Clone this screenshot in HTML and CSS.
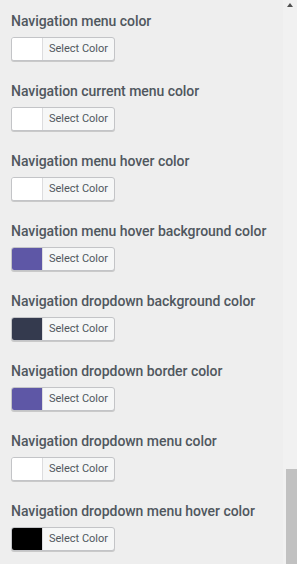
FILE: index.html
```html
<!DOCTYPE html>
<html lang="en">
<head>
    <meta charset="UTF-8">
    <meta name="viewport" content="width=device-width, initial-scale=1.0">
    <title>Navigation Colors</title>
    <link rel="stylesheet" href="styles.css">
</head>
<body>
    <div class="panel">
        <div class="settings">
            <div class="setting">
                <h3 class="setting-title">Navigation menu color</h3>
                <button class="color-button"><span class="swatch swatch-white"></span><span class="button-text">Select Color</span></button>
            </div>
            <div class="setting">
                <h3 class="setting-title">Navigation current menu color</h3>
                <button class="color-button"><span class="swatch swatch-white"></span><span class="button-text">Select Color</span></button>
            </div>
            <div class="setting">
                <h3 class="setting-title">Navigation menu hover color</h3>
                <button class="color-button"><span class="swatch swatch-white"></span><span class="button-text">Select Color</span></button>
            </div>
            <div class="setting">
                <h3 class="setting-title">Navigation menu hover background color</h3>
                <button class="color-button"><span class="swatch swatch-purple"></span><span class="button-text">Select Color</span></button>
            </div>
            <div class="setting">
                <h3 class="setting-title">Navigation dropdown background color</h3>
                <button class="color-button"><span class="swatch swatch-dark"></span><span class="button-text">Select Color</span></button>
            </div>
            <div class="setting">
                <h3 class="setting-title">Navigation dropdown border color</h3>
                <button class="color-button"><span class="swatch swatch-purple"></span><span class="button-text">Select Color</span></button>
            </div>
            <div class="setting">
                <h3 class="setting-title">Navigation dropdown menu color</h3>
                <button class="color-button"><span class="swatch swatch-white"></span><span class="button-text">Select Color</span></button>
            </div>
            <div class="setting">
                <h3 class="setting-title">Navigation dropdown menu hover color</h3>
                <button class="color-button"><span class="swatch swatch-black"></span><span class="button-text">Select Color</span></button>
            </div>
        </div>

        <!-- fake scrollbar, scrolled near the bottom -->
        <div class="scrollbar">
            <span class="scroll-arrow"></span>
            <span class="scroll-thumb"></span>
        </div>
    </div>
</body>
</html>
```

FILE: styles.css
```css
:root {
    --background: #eeeeee;
    --text: #50575e;
    --border: #c3c4c7;
    --button-bg: #f6f7f7;
    --track: #f1f1f1;
    --thumb: #c1c1c1;
}

body {
    margin: 0;
    font-family: Roboto, 'Noto Sans', sans-serif;
    background-color: var(--background);
    color: var(--text);
}

.panel {
    display: flex;
    height: 564px;
    overflow: hidden;
}

.settings {
    flex: 1;
    padding: 11px 0 0 11px;
}

.setting {
    margin-bottom: 20px;
}

.setting-title {
    margin: 0 0 6px;
    font-size: 14px;
    line-height: 20px;
    font-weight: 500;
    letter-spacing: -0.05px;
    color: var(--text);
}

.color-button {
    display: flex;
    align-items: stretch;
    width: 104px;
    height: 24px;
    padding: 0;
    border: 1px solid var(--border);
    border-radius: 3px;
    background-color: var(--button-bg);
    box-shadow: 0 1px 0 #c9c9c9;
    overflow: hidden;
    font-family: inherit;
    cursor: pointer;
}

.swatch {
    width: 30px;
    border-right: 1px solid #dcdcde;
}

.swatch-white { background-color: #ffffff; }
.swatch-purple { background-color: #5e57a6; }
.swatch-dark { background-color: #343a4e; }
.swatch-black { background-color: #000000; }

.button-text {
    flex: 1;
    font-size: 11px;
    line-height: 22px;
    color: var(--text);
    text-align: center;
}

.scrollbar {
    width: 14px;
    display: flex;
    flex-direction: column;
    align-items: center;
    background-color: var(--track);
}

.scroll-arrow {
    margin-top: 3px;
    width: 0;
    height: 0;
    border-left: 3px solid transparent;
    border-right: 3px solid transparent;
    border-bottom: 4px solid #505050;
}

.scroll-thumb {
    margin-top: auto;
    width: 11px;
    height: 95px;
    margin-left: 2px;
    background-color: var(--thumb);
}
```
